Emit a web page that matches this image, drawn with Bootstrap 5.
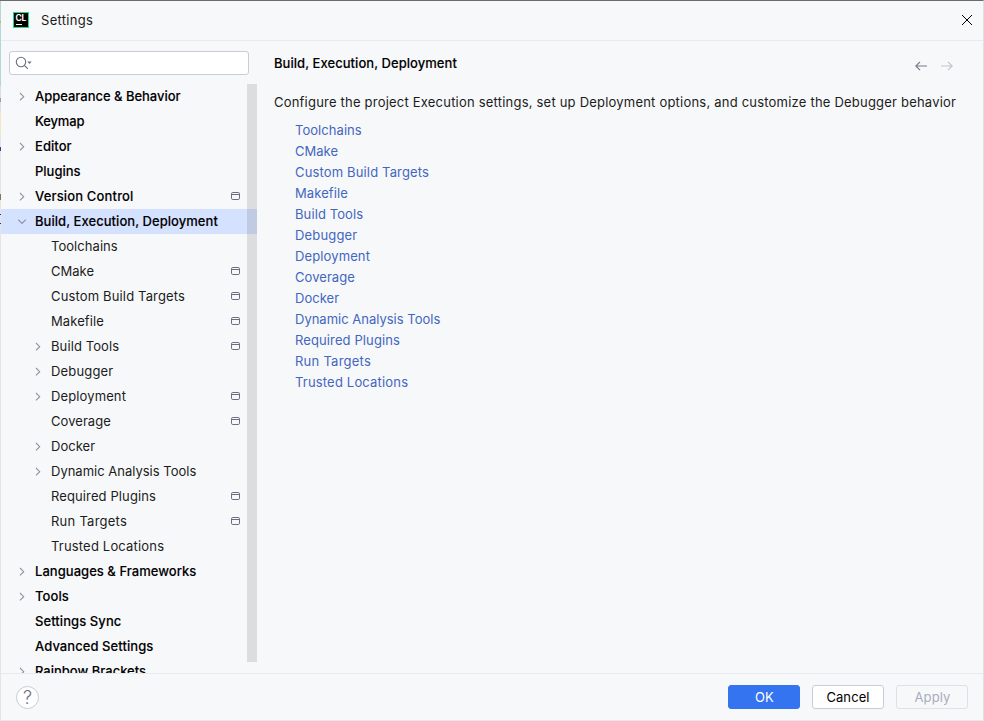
<!DOCTYPE html>
<html lang="en">
<head>
<meta charset="utf-8">
<title>Settings</title>
<link href="https://cdn.jsdelivr.net/npm/bootstrap@5.3.0/dist/css/bootstrap.min.css" rel="stylesheet">
<style>
  body { font-family: Inter, "Noto Sans", sans-serif; font-size: 13px; line-height: 20px; letter-spacing: .21px; color: #1b1c20; background: #f7f8fa; }
  .dialog { width: 984px; height: 721px; border-top: 1px solid #6c6c70; border-bottom: 1px solid #e6e7ea; border-right: 1px solid #dfe0e4; }
  .edge { flex: 0 0 1px; background: linear-gradient(#b5d6d3 0 20px, #d6b25c 20px 22px, #b5d6d3 22px 85px, #dcdde2 85px 97px, #9b98b8 97px 101px, #dcdde2 101px 110px, #f7e6c6 110px 133px, #e4e5e9 133px 146px, #3a3f8c 146px 150px, #e4e5e9 150px 193px, #8d7355 193px 199px, #e4e5e9 199px 213px, #333 213px 214px, #e4e5e9 214px 222px, #333 222px 223px, #e4e5e9 223px); }
  .body-col { min-width: 0; }
  .titlebar { height: 40px; border-bottom: 1px solid #e9eaee; padding: 0 10px 1px 12px; }
  .titlebar .caption-text { margin-left: 12px; letter-spacing: .3px; }
  .side { flex: 0 0 256px; padding-top: 10px; }
  .search { width: 240px; height: 24px; margin-left: 8px; border: 1px solid #c9ccd6; border-radius: 3px; background: #fff; padding-left: 5px; }
  .tree { margin-top: 9px; height: 589px; }
  .bar { width: 10px; height: 578px; top: 0; right: 0; background: rgba(115,115,115,.2); }
  .item { height: 25px; padding-left: 16px; padding-right: 16px; }
  .item span { margin-top: -2px; }
  .item .tw { width: 10px; height: 10px; margin-right: 8px; }
  .item.sub { padding-left: 32px; }
  .item.top, .heading { font-weight: 500; letter-spacing: .05px; color: #000; -webkit-text-stroke: .1px #000; }
  .item.selected { background: #d4e2ff; }
  .main-pane { min-width: 0; padding: 12px 30px 0 17px; }
  .nav-arrows { gap: 14px; padding-top: 8px; }
  .desc { margin-top: 19px; }
  .links { padding-left: 21px; margin-top: 8px; }
  .links a { color: #4366bf; line-height: 21px; text-decoration: none; }
  .footer-bar { height: 47px; border-top: 1px solid #e9eaee; padding: 0 15px; }
  .footer-bar .buttons { gap: 12px; }
  .dlg-btn { width: 72px; height: 24px; border-radius: 3px; padding: 0; font-size: 13px; line-height: 22px; letter-spacing: .1px; }
  .dlg-btn.plain { background: #fff; border-color: #c9ccd6; color: #000; }
  .dlg-btn.off { background: transparent; border-color: #dfe1e5; color: #a8adbd; opacity: 1; padding-left: 1px; }
  .dlg-btn.ok { background: #3574f0; border-color: #3574f0; color: #fff; padding-left: 1px; }
  .help { width: 23px; height: 23px; border: 1px solid #c9ccd6; border-radius: 50%; background: #fff; color: #6c707e; font-size: 18px; font-weight: 300; line-height: 21px; letter-spacing: 0; text-align: center; }
  svg { display: block; flex: none; }
</style>
</head>
<body class="overflow-hidden">
<svg width="0" height="0" class="position-absolute">
  <symbol id="right" viewBox="0 0 10 10"><path d="M3 1 6.7 4.7 3 8.4" fill="none" stroke="#9093a0" stroke-width="1.1"/></symbol>
  <symbol id="down" viewBox="0 0 10 10"><path d="M1.2 2.7 5 6.5 8.8 2.7" fill="none" stroke="#8c909e" stroke-width="1.1"/></symbol>
  <symbol id="proj" viewBox="0 0 10 9"><rect x=".5" y=".5" width="8" height="7" rx="1.3" fill="none" stroke="#6c707e"/><path d="M1 2.5h7" stroke="#6c707e"/></symbol>
</svg>
<div class="dialog d-flex">
  <div class="edge"></div>
  <div class="body-col flex-grow-1 d-flex flex-column">
    <header class="titlebar d-flex align-items-center">
      <svg width="16" height="16" viewBox="0 0 16 16"><rect width="16" height="16" fill="#21d789"/><rect x="1" y="1" width="14" height="14" fill="#000"/><text x="2.4" y="9" font-size="8.4" font-weight="700" fill="#fff" letter-spacing="0" font-family="Inter">CL</text><path d="M3 12.5h6" stroke="#fff"/></svg>
      <span class="caption-text flex-grow-1">Settings</span>
      <svg width="12" height="12" viewBox="0 0 12 12"><path d="M1 1 11 11M11 1 1 11" stroke="#000" stroke-width="1" shape-rendering="crispEdges"/></svg>
    </header>
    <div class="d-flex flex-grow-1">
      <aside class="side">
        <div class="search d-flex align-items-center">
          <svg width="18" height="16" viewBox="0 0 18 16"><circle cx="6" cy="7" r="4.7" fill="none" stroke="#6c707e" stroke-width="1.1"/><path d="m9.4 10.4 3.4 3.4" stroke="#6c707e" stroke-width="1.1"/><path d="M12.3 6.5h4.4L14.5 9z" fill="#6c707e"/></svg>
        </div>
        <nav class="tree position-relative overflow-hidden" id="tree"></nav>
      </aside>
      <main class="main-pane flex-grow-1">
        <div class="d-flex justify-content-between">
          <div class="heading">Build, Execution, Deployment</div>
          <div class="nav-arrows d-flex">
            <svg width="12" height="11" viewBox="0 0 12 11"><path d="M0.8 5H12M5 .8 .8 5 5 9.2" fill="none" stroke="#777b8a" stroke-width="1.2"/></svg>
            <svg width="12" height="11" viewBox="0 0 12 11"><path d="M11.2 5H0M7 .8 11.2 5 7 9.2" fill="none" stroke="#c3c5ca" stroke-width="1.2"/></svg>
          </div>
        </div>
        <div class="desc text-nowrap">Configure the project Execution settings, set up Deployment options, and customize the Debugger behavior</div>
        <div class="links d-flex flex-column align-items-start" id="links"></div>
      </main>
    </div>
    <footer class="footer-bar d-flex align-items-center">
      <div class="help me-auto">?</div>
      <div class="buttons d-flex">
        <button class="btn dlg-btn ok">OK</button>
        <button class="btn dlg-btn plain">Cancel</button>
        <button class="btn dlg-btn off" disabled>Apply</button>
      </div>
    </footer>
  </div>
</div>
<script src="https://cdn.jsdelivr.net/npm/bootstrap@5.3.0/dist/js/bootstrap.bundle.min.js"></script>
<script>
  // [label, arrow, per-project marker, letter spacing in px]
  const children = [['Toolchains', '', 0, .05], ['CMake', '', 1, 0], ['Custom Build Targets', '', 1, .15], ['Makefile', '', 1, .1], ['Build Tools', 'right', 1, .1], ['Debugger', 'right', 0, .17], ['Deployment', 'right', 1, .12], ['Coverage', '', 1, .06], ['Docker', 'right', 0, .02], ['Dynamic Analysis Tools', 'right', 0, 0], ['Required Plugins', '', 1, .11], ['Run Targets', '', 1, .25], ['Trusted Locations', '', 0, .18]];
  const before = [['Appearance & Behavior', 'right', 0, -.02], ['Keymap', '', 0, -.15], ['Editor', 'right', 0, .05], ['Plugins', '', 0, 0], ['Version Control', 'right', 1, .16], ['Build, Execution, Deployment', 'down', 0, .05]];
  const after = [['Languages & Frameworks', 'right', 0, .04], ['Tools', 'right', 0, .1], ['Settings Sync', '', 0, .08], ['Advanced Settings', '', 0, .07], ['Rainbow Brackets', 'right', 0, 0]];
  const esc = s => s.replace('&', '&amp;');
  const row = kind => ([label, arrow, marker, ls]) =>
    `<div class="item ${kind} ${arrow === 'down' ? 'selected' : ''} d-flex align-items-center text-nowrap"><svg class="tw">${arrow ? `<use href="#${arrow}" width="10" height="10"/>` : ''}</svg><span class="flex-grow-1" style="letter-spacing:${ls}px">${esc(label)}</span>${marker ? '<svg width="10" height="9"><use href="#proj"/></svg>' : ''}</div>`;
  document.getElementById('tree').innerHTML = before.map(row('top')).join('') + children.map(row('sub')).join('') + after.map(row('top')).join('') + '<div class="bar position-absolute"></div>';
  document.getElementById('links').innerHTML = children.map(c => `<a href="#" style="letter-spacing:${c[3]}px">${c[0]}</a>`).join('');
</script>
</body>
</html>
